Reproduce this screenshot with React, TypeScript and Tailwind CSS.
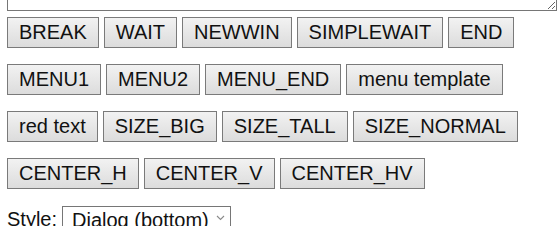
import type { ReactNode } from 'react';

const rows: string[][] = [
  ['BREAK', 'WAIT', 'NEWWIN', 'SIMPLEWAIT', 'END'],
  ['MENU1', 'MENU2', 'MENU_END', 'menu template'],
  ['red text', 'SIZE_BIG', 'SIZE_TALL', 'SIZE_NORMAL'],
  ['CENTER_H', 'CENTER_V', 'CENTER_HV'],
];

function Btn({ children }: { children: ReactNode }) {
  return (
    <button
      type="button"
      className="border border-[#7a7a7a] bg-gradient-to-b from-[#f2f2f2] to-[#dcdcdc] px-[11px] py-[3px] leading-[23px] text-[#111] whitespace-nowrap"
    >
      {children}
    </button>
  );
}

export default function App() {
  return (
    <div className="h-[226px] overflow-hidden bg-white px-[7px] font-['Liberation_Sans',Arial,sans-serif] text-[20px] text-[#111]">
      {/* page is scrolled: only the bottom of the textarea shows */}
      <textarea
        className="-mt-[50px] block h-[61px] w-[550px] border border-[#767676] bg-white"
        defaultValue=""
      />
      {rows.map((row, i) => (
        <div key={i} className={`flex gap-[5px] ${i === 0 ? 'mt-[6px]' : 'mt-[16px]'}`}>
          {row.map((label) => (
            <Btn key={label}>{label}</Btn>
          ))}
        </div>
      ))}
      <div className="mt-[16px] flex items-start gap-[5px]">
        <span className="leading-[23px] pt-[3px]">Style:</span>
        <div className="relative">
          <select
            className="appearance-none border border-[#767676] bg-white pl-[9px] pr-[18px] py-[2px] leading-[23px] text-[#111] w-[169px]"
            defaultValue="bottom"
          >
            <option value="bottom">Dialog (bottom)</option>
            <option value="top">Dialog (top)</option>
          </select>
          <svg
            className="pointer-events-none absolute right-[6px] top-[10px]"
            width="9"
            height="6"
            viewBox="0 0 9 6"
          >
            <path d="M1 1l3.5 3.5L8 1" fill="none" stroke="#8a8a8a" strokeWidth="1.1" />
          </svg>
        </div>
      </div>
    </div>
  );
}
